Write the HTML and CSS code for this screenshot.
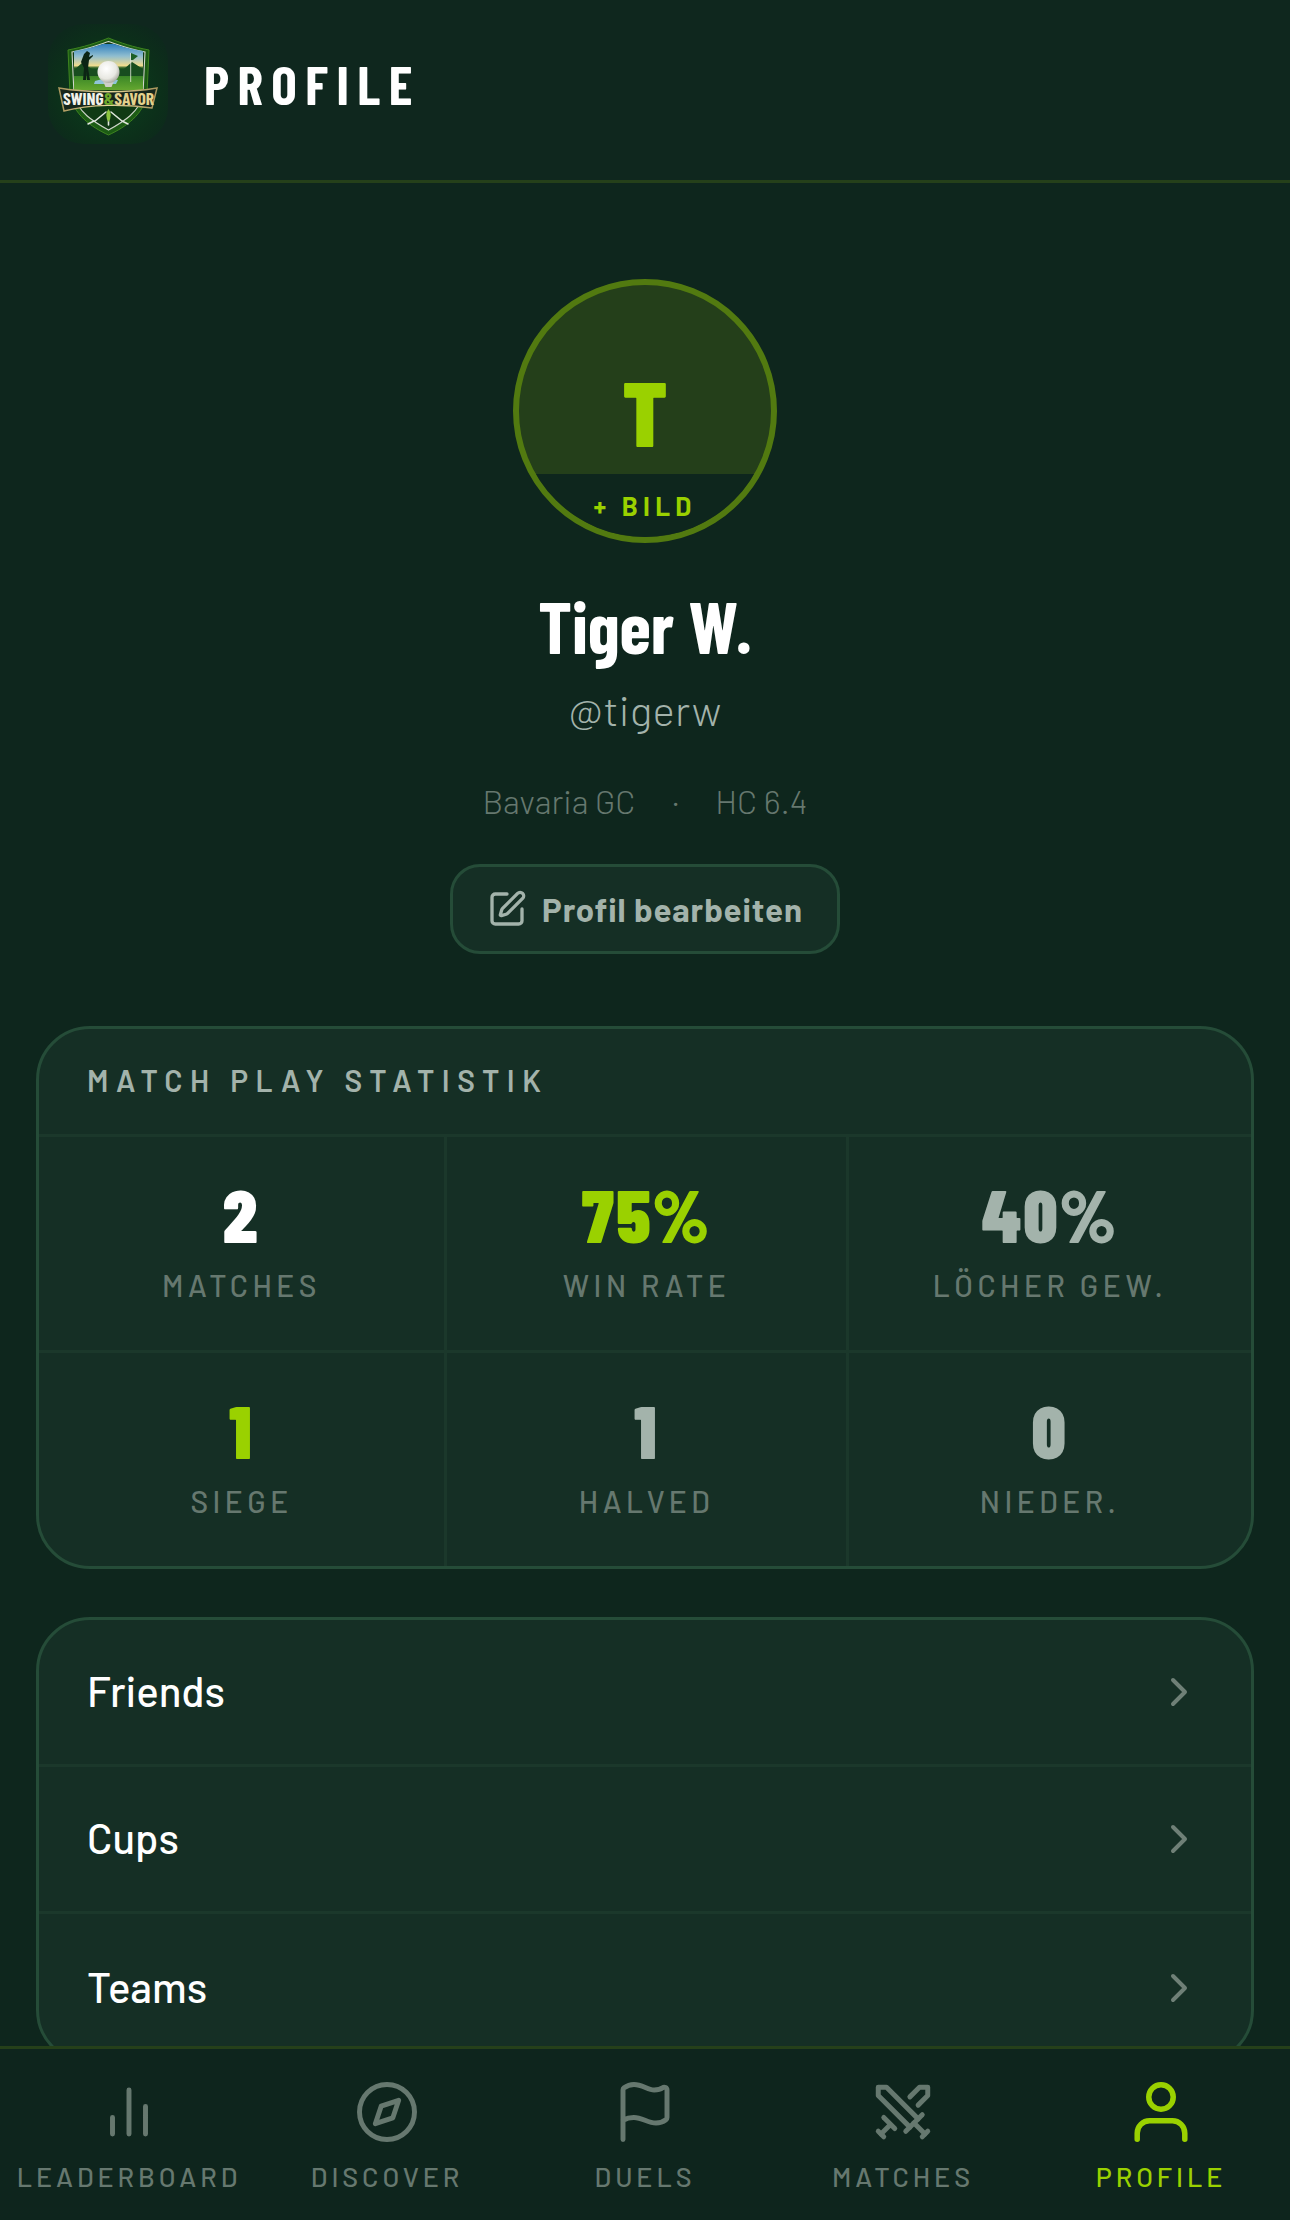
FILE: index.html
```html
<!DOCTYPE html>
<html lang="de">
<head>
<meta charset="utf-8">
<title>Profile</title>
<link rel="stylesheet" href="styles.css">
</head>
<body>
<div class="app">
  <header class="topbar">
    <svg class="logo" viewBox="0 0 120 120">
      <defs>
        <radialGradient id="lg" cx="50%" cy="55%" r="60%"><stop offset="0" stop-color="#0a421d"/><stop offset=".75" stop-color="#0c2f1a"/><stop offset="1" stop-color="#0d291c"/></radialGradient>
        <linearGradient id="sky" x1="0" y1="0" x2="0" y2="1"><stop offset="0" stop-color="#2f7fbd"/><stop offset=".25" stop-color="#8fbdd0"/><stop offset=".45" stop-color="#f0dc8e"/><stop offset=".5" stop-color="#245a20"/><stop offset=".7" stop-color="#3f8a28"/><stop offset="1" stop-color="#6aab30"/></linearGradient>
        <linearGradient id="ban" x1="0" y1="0" x2="1" y2="0"><stop offset="0" stop-color="#a8955c"/><stop offset=".5" stop-color="#e6d79c"/><stop offset="1" stop-color="#a8955c"/></linearGradient>
        <radialGradient id="ball" cx="40%" cy="35%" r="70%"><stop offset="0" stop-color="#ffffff"/><stop offset=".65" stop-color="#e8e8e2"/><stop offset="1" stop-color="#a2a298"/></radialGradient>
        <clipPath id="skyclip"><path d="M26 27C40 25 50 22 60.500 18C71 22 81 25 95 27V66H26Z"/></clipPath>
      </defs>
      <rect width="120" height="120" rx="36" fill="url(#lg)"/>
      <path d="M20 26C36 23 48 19 60.500 14C73 19 85 23 101 26L99 70C96 90 78 103 60.500 111C43 103 25 90 22 70Z" fill="#1c5c14" stroke="#3f8420" stroke-width="1"/>
      <path d="M24 28C40 25 50 21 60.500 17.500C71 21 81 25 97 28L95 70C92 88 75 98 60.500 106C46 98 29 88 26 70Z" fill="#103a14" stroke="#cfd6cb" stroke-width="1.100"/>
      <g clip-path="url(#skyclip)">
        <rect x="25" y="20" width="71" height="48" fill="url(#sky)"/>
        <path d="M26 46L34 39L44 45H76L84 38L95 45V52H26Z" fill="#184d1f"/>
        <path d="M47 57Q58 53 70 56L68 60H46Z" fill="#8fc4d8"/>
        <path d="M35 56L36 44L33 38L36 30L39 27L42 29L41 33L45 31L45 32L41 36L40 44L42 56H39L38 47L38 56Z" fill="#0b2414"/>
        <path d="M82.700 58V29" stroke="#e8e8e0" stroke-width=".8"/>
        <path d="M83 29L90 32L85 36L83 36Z" fill="#1d5f24"/>
      </g>
      <path d="M55 57H66L63.500 63H57.500Z" fill="#cfcfc6"/>
      <circle cx="60.500" cy="48" r="11" fill="url(#ball)"/>
      <path d="M11 64C40 69 80 69 109 64L104 84C78 80 42 80 16 87Z" fill="#16261b" stroke="url(#ban)" stroke-width="1.500"/>
      <text class="logo-text" x="60.500" y="81" text-anchor="middle"><tspan class="logo-white">SWING</tspan><tspan class="logo-green">&amp;</tspan><tspan class="logo-gold">SAVOR</tspan></text>
      <path d="M46 97L40 100M74 97L80 100M47 97L58 88M74 97L63 88M60.500 101V94" stroke="#dfe6dc" stroke-width="1.600" stroke-linecap="round" fill="none"/>
      <path d="M60.500 85Q65 91 60.500 98Q56 91 60.500 85Z" fill="#8cc63e"/>
    </svg>
    <h1 class="page-title">PROFILE</h1>
  </header>

  <main class="content">
    <section class="hero">
      <div class="avatar">
        <span class="avatar-letter">T</span>
        <span class="avatar-add">+ BILD</span>
      </div>
      <h2 class="name">Tiger W.</h2>
      <p class="handle">@tigerw</p>
      <p class="meta"><span>Bavaria GC</span><span class="dot">·</span><span>HC 6.4</span></p>
      <button class="edit-btn">
        <svg class="edit-icon" viewBox="0 0 24 24"><path d="M12 3H5a2 2 0 0 0-2 2v14a2 2 0 0 0 2 2h14a2 2 0 0 0 2-2v-7"/><path d="M18.375 2.625a1 1 0 0 1 3 3l-9.013 9.014a2 2 0 0 1-.853.505l-2.873.84a.5.5 0 0 1-.62-.62l.84-2.873a2 2 0 0 1 .506-.852z"/></svg>
        Profil bearbeiten
      </button>
    </section>

    <section class="card stats">
      <div class="stats-head">MATCH PLAY STATISTIK</div>
      <div class="stats-grid">
        <div class="stat"><span class="num white">2</span><span class="lbl">MATCHES</span></div>
        <div class="stat"><span class="num lime">75%</span><span class="lbl">WIN RATE</span></div>
        <div class="stat"><span class="num grey">40%</span><span class="lbl">LÖCHER GEW.</span></div>
        <div class="stat"><span class="num lime">1</span><span class="lbl">SIEGE</span></div>
        <div class="stat"><span class="num grey">1</span><span class="lbl">HALVED</span></div>
        <div class="stat"><span class="num grey">0</span><span class="lbl">NIEDER.</span></div>
      </div>
    </section>

    <section class="card menu">
      <div class="menu-row"><span class="menu-text">Friends</span><svg class="chev" viewBox="0 0 24 24"><path d="m9 18 6-6-6-6"/></svg></div>
      <div class="menu-row"><span class="menu-text">Cups</span><svg class="chev" viewBox="0 0 24 24"><path d="m9 18 6-6-6-6"/></svg></div>
      <div class="menu-row"><span class="menu-text">Teams</span><svg class="chev" viewBox="0 0 24 24"><path d="m9 18 6-6-6-6"/></svg></div>
    </section>
  </main>

  <nav class="tabbar">
    <div class="tab">
      <svg class="tab-icon" viewBox="0 0 24 24"><path d="M6 20v-6M12 20V4M18 20V10"/></svg>
      <span class="tab-label">LEADERBOARD</span>
    </div>
    <div class="tab">
      <svg class="tab-icon" viewBox="0 0 24 24"><circle cx="12" cy="12" r="10"/><polygon points="16.240 7.760 14.120 14.120 7.760 16.240 9.880 9.880"/></svg>
      <span class="tab-label">DISCOVER</span>
    </div>
    <div class="tab">
      <svg class="tab-icon" viewBox="0 0 24 24"><path d="M4 22V4a1 1 0 0 1 .4-.8A6 6 0 0 1 8 2c3 0 5 2 7.333 2q2 0 3.067-.8A1 1 0 0 1 20 4v10a1 1 0 0 1-.4.8A6 6 0 0 1 16 16c-3 0-5-2-8-2a8 8 0 0 0-4 1"/></svg>
      <span class="tab-label">DUELS</span>
    </div>
    <div class="tab">
      <svg class="tab-icon" viewBox="0 0 24 24"><polyline points="14.500 17.500 3 6 3 3 6 3 17.500 14.500"/><line x1="13" y1="19" x2="19" y2="13"/><line x1="16" y1="16" x2="20" y2="20"/><line x1="19" y1="21" x2="21" y2="19"/><polyline points="14.500 6.500 18 3 21 3 21 6 17.500 9.500"/><line x1="5" y1="14" x2="9" y2="18"/><line x1="7" y1="17" x2="4" y2="20"/><line x1="3" y1="19" x2="5" y2="21"/></svg>
      <span class="tab-label">MATCHES</span>
    </div>
    <div class="tab active">
      <svg class="tab-icon" viewBox="0 0 24 24"><path d="M20.650 21.900v-2.200a4.500 4.500 0 0 0-4.500-4.500H7.850a4.500 4.500 0 0 0-4.500 4.500v2.200"/><circle cx="12" cy="6.550" r="4.450"/></svg>
      <span class="tab-label">PROFILE</span>
    </div>
  </nav>
</div>
</body>
</html>
```
FILE: styles.css
```css
* { box-sizing: border-box; margin: 0; padding: 0; }
html, body { height: 100%; }
body { background: #0e261d; font-family: Barlow, Roboto, "Liberation Sans", sans-serif; color: #fff; overflow: hidden; }

.app { width: 1290px; height: 2220px; display: flex; flex-direction: column; background: #0e261d; }

.topbar { height: 183px; flex: none; display: flex; align-items: flex-start; padding: 24px 48px 0; gap: 36px; border-bottom: 3px solid #25401a; background: #0f271e; }
.logo { width: 120px; height: 120px; flex: none; }
.logo-text { font-family: "Barlow Condensed", Roboto, sans-serif; font-weight: 700; font-size: 17.500px; }
.logo-white { fill: #f2f2ea; }
.logo-green { fill: #6ea82c; }
.logo-gold { fill: #e3d18d; }
.page-title { font-family: "Barlow Condensed", Roboto, sans-serif; font-weight: 700; font-size: 54px; line-height: 120px; letter-spacing: 8.400px; color: #fff; }

.content { flex: 1; min-height: 0; overflow: hidden; padding: 96px 36px 0; }

.hero { display: flex; flex-direction: column; align-items: center; }
.avatar { width: 264px; height: 264px; border-radius: 50%; border: 6px solid #527a10; background: #243f1a; position: relative; overflow: hidden; display: flex; justify-content: center; padding-top: 72px; }
.avatar-letter { font-family: "Barlow Condensed", Roboto, sans-serif; font-weight: 900; font-size: 90px; line-height: 108px; color: #9ad100; }
.avatar-add { position: absolute; left: 0; right: 0; bottom: 0; height: 63px; background: #0e261d; color: #9ad100; font-size: 26px; font-weight: 700; letter-spacing: 5.200px; text-align: center; line-height: 63px; }

.name { margin-top: 40px; font-family: "Barlow Condensed", Roboto, sans-serif; font-weight: 700; font-size: 72px; line-height: 84px; color: #fff; }
.handle { margin-top: 15px; font-size: 42px; line-height: 54px; font-weight: 300; letter-spacing: .3px; color: #a3b3ab; }
.meta { margin-top: 41px; display: flex; gap: 37px; font-size: 33px; line-height: 48px; font-weight: 300; color: #66786f; }
.dot { width: 6px; text-align: center; }
.edit-btn { margin-top: 39px; width: 390px; height: 90px; border: 3px solid #254c38; border-radius: 30px; background: #152f25; color: #a3b3ab; font-family: inherit; font-size: 33px; font-weight: 700; letter-spacing: .9px; display: flex; align-items: center; justify-content: center; gap: 15px; }
.edit-icon { width: 40px; height: 40px; fill: none; stroke: #a3b3ab; stroke-width: 2; stroke-linecap: round; stroke-linejoin: round; }

.card { background: #152f25; border: 3px solid #254c38; border-radius: 54px; overflow: hidden; }
.stats { margin-top: 72px; }
.stats-head { height: 108px; padding: 0 48px; border-bottom: 3px solid #1b382b; font-size: 30px; font-weight: 600; letter-spacing: 7.500px; line-height: 102px; color: #a3b3ab; }
.stats-grid { display: grid; grid-template-columns: 408px 402px 1fr; grid-template-rows: 216px 213px; }
.stat { display: flex; flex-direction: column; align-items: center; padding-top: 35px; border-right: 3px solid #1b382b; border-bottom: 3px solid #1b382b; }
.stat:nth-child(3n) { border-right: 0; }
.stat:nth-child(n+4) { border-bottom: 0; }
.num { font-family: "Barlow Condensed", Roboto, sans-serif; font-weight: 900; font-size: 74px; line-height: 84px; letter-spacing: 2.500px; }
.lbl { margin-top: 8px; font-size: 30px; line-height: 42px; font-weight: 500; letter-spacing: 4.500px; color: #66786f; }
.white { color: #fff; }
.lime { color: #9ad100; }
.grey { color: #a3b3ab; }

.menu { margin-top: 48px; }
.menu-row { height: 147px; display: flex; align-items: center; justify-content: space-between; padding: 0 48px; border-bottom: 3px solid #1b382b; font-size: 42px; font-weight: 500; color: #fff; }
.menu-row:last-child { border-bottom: 0; }
.menu-text { margin-bottom: 4px; }
.chev { width: 48px; height: 48px; fill: none; stroke: #6f8077; stroke-width: 2; stroke-linecap: round; stroke-linejoin: round; }

.tabbar { height: 174px; flex: none; display: grid; grid-template-columns: repeat(5, 1fr); border-top: 3px solid #25401a; background: #0e251d; }
.tab { display: flex; flex-direction: column; align-items: center; padding-top: 30px; color: #66786f; }
.tab-icon { width: 66px; height: 66px; fill: none; stroke: currentColor; stroke-width: 1.800; stroke-linecap: round; stroke-linejoin: round; }
.tab-label { margin-top: 13px; font-size: 27px; line-height: 36px; font-weight: 500; letter-spacing: 3.900px; }
.tab.active { color: #9ad100; }
.tab.active .tab-icon { stroke-width: 2; }
```
